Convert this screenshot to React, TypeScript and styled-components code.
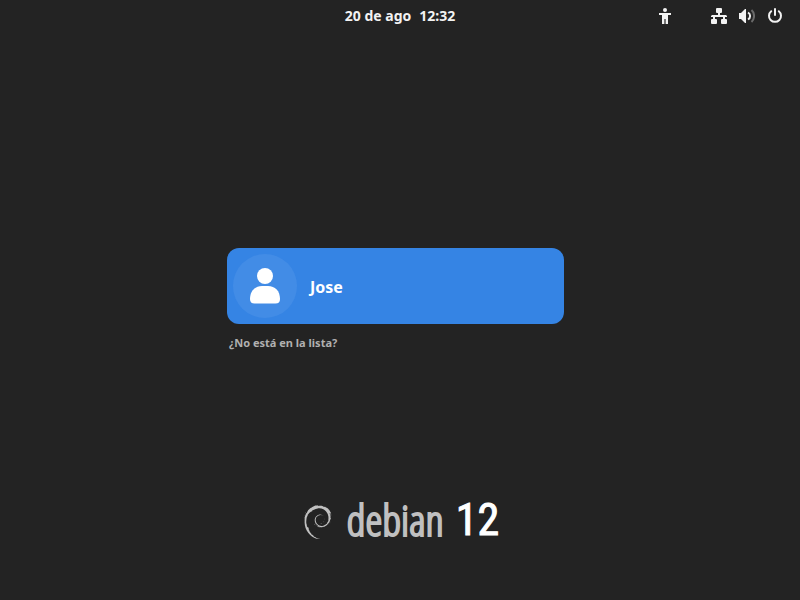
import React from "react";
import styled, { createGlobalStyle } from "styled-components";
import { SiDebian } from "react-icons/si";

const GlobalStyle = createGlobalStyle`
  * { box-sizing: border-box; }
  body {
    margin: 0;
    background: #232323;
    color: #f2f2f2;
    font-family: "Noto Sans", "Open Sans", sans-serif;
  }
  button { border: 0; margin: 0; font-family: inherit; color: inherit; cursor: pointer; }
`;

const Screen = styled.div`
  min-height: 100vh;
  display: grid;
  grid-template-rows: 1fr auto 1fr;
`;

const TopBar = styled.header`
  align-self: start;
  height: 32px;
  display: grid;
  grid-template-columns: 1fr auto 1fr;
  align-items: center;
`;

const Clock = styled.button`
  grid-column: 2;
  display: flex;
  gap: 8px;
  padding: 0;
  background: none;
  font-size: 14px;
  line-height: 20px;
  font-weight: 700;
`;

const Indicators = styled.div`
  display: flex;
  justify-content: flex-end;
  gap: 38px;
  padding-right: 17px;
`;

const IndicatorButton = styled.button`
  display: flex;
  gap: 12px;
  padding: 0;
  background: none;
  svg { display: block; }
`;

const LoginArea = styled.main`
  display: flex;
  justify-content: center;
  padding-right: 9px;
`;

const Login = styled.div`
  width: 337px;
  max-width: 100%;
`;

const UserButton = styled.button`
  width: 100%;
  display: flex;
  align-items: center;
  gap: 13px;
  padding: 6px;
  border-radius: 12px;
  background: #3584e4;
  text-align: left;
`;

const Avatar = styled.span`
  width: 64px;
  height: 64px;
  border-radius: 50%;
  background: #428ce6;
  svg { display: block; }
`;

const UserName = styled.span`
  padding-top: 2px;
  font-size: 16px;
  line-height: 24px;
  font-weight: 700;
  color: #fff;
`;

const NotListed = styled.button`
  display: block;
  margin-top: 10px;
  padding: 0 2px;
  background: none;
  color: #b0b0b0;
  font-size: 11px;
  line-height: 18px;
  font-weight: 700;
`;

const Brand = styled.footer`
  align-self: end;
  display: flex;
  justify-content: center;
  align-items: center;
  padding-bottom: 56px;
  color: #c0c0c0;
  line-height: 48px;
`;

const Swirl = styled(SiDebian)`
  margin: 4px 12px 0 0;
`;

const Wordmark = styled.span`
  font-family: "Open Sans Condensed Light", "Open Sans Condensed", sans-serif;
  font-size: 43px;
  font-weight: 300;
  -webkit-text-stroke: 2px currentColor;
`;

const Version = styled.span`
  margin-left: 12px;
  font-family: "Roboto Condensed", "Roboto", sans-serif;
  font-size: 44px;
  font-weight: 400;
  color: #fff;
  -webkit-text-stroke: 1px currentColor;
`;

const AccessibilityIcon = () => (
  <svg width="16" height="16" viewBox="0 0 16 16" fill="currentColor" aria-hidden="true">
    <circle cx="8" cy="2" r="2" />
    <path d="M2 5h12v2h-3v9H8.600v-5H7.400v5H5V7H2z" />
  </svg>
);

const NetworkIcon = () => (
  <svg width="16" height="16" viewBox="0 0 16 16" fill="currentColor" aria-hidden="true">
    <rect x="5" y="0" width="6" height="5" rx="1" />
    <rect x="0" y="11" width="6" height="5" rx="1" />
    <rect x="10" y="11" width="6" height="5" rx="1" />
    <path d="M7 4h2v3h6l1 1v1h-2v3h-2V9H4v3H2V9H0V8l1-1h6z" />
  </svg>
);

const VolumeIcon = () => (
  <svg width="16" height="16" viewBox="0 0 16 16" fill="none" stroke="currentColor" strokeWidth="2" aria-hidden="true">
    <path d="M0 5h2l4-4h1v14H6l-4-4H0z" fill="currentColor" stroke="none" />
    <path d="M9 4.5c2.8 1.6 2.8 5.400 0 7" />
    <path d="M12.500 2c3.400 3 3.400 9 0 12" opacity="0.35" />
  </svg>
);

const PowerIcon = () => (
  <svg width="16" height="16" viewBox="0 0 16 16" fill="none" stroke="currentColor" strokeWidth="2" strokeLinecap="round" aria-hidden="true">
    <path d="M8 1v6" />
    <path d="M4.200 3.200a6 6 0 1 0 7.600 0" />
  </svg>
);

const PersonIcon = () => (
  <svg width="64" height="64" viewBox="0 0 64 64" fill="#fff" aria-hidden="true">
    <circle cx="32" cy="22" r="8" />
    <path d="M17 45c0-8 5-13 12-13h6c7 0 12 5 12 13 0 3-1.500 4.500-4.500 4.500h-21c-3 0-4.500-1.500-4.500-4.500z" />
  </svg>
);

export default function App() {
  return (
    <>
      <GlobalStyle />
      <Screen>
        <TopBar>
          <Clock type="button">
            <span>20 de ago</span>
            <span>12:32</span>
          </Clock>
          <Indicators>
            <IndicatorButton type="button" aria-label="Accesibilidad">
              <AccessibilityIcon />
            </IndicatorButton>
            <IndicatorButton type="button" aria-label="Sistema">
              <NetworkIcon />
              <VolumeIcon />
              <PowerIcon />
            </IndicatorButton>
          </Indicators>
        </TopBar>
        <LoginArea>
          <Login>
            <UserButton type="button">
              <Avatar>
                <PersonIcon />
              </Avatar>
              <UserName>Jose</UserName>
            </UserButton>
            <NotListed type="button">¿No está en la lista?</NotListed>
          </Login>
        </LoginArea>
        <Brand>
          <Swirl size={34} aria-hidden="true" />
          <Wordmark>debian</Wordmark>
          <Version>12</Version>
        </Brand>
      </Screen>
    </>
  );
}
